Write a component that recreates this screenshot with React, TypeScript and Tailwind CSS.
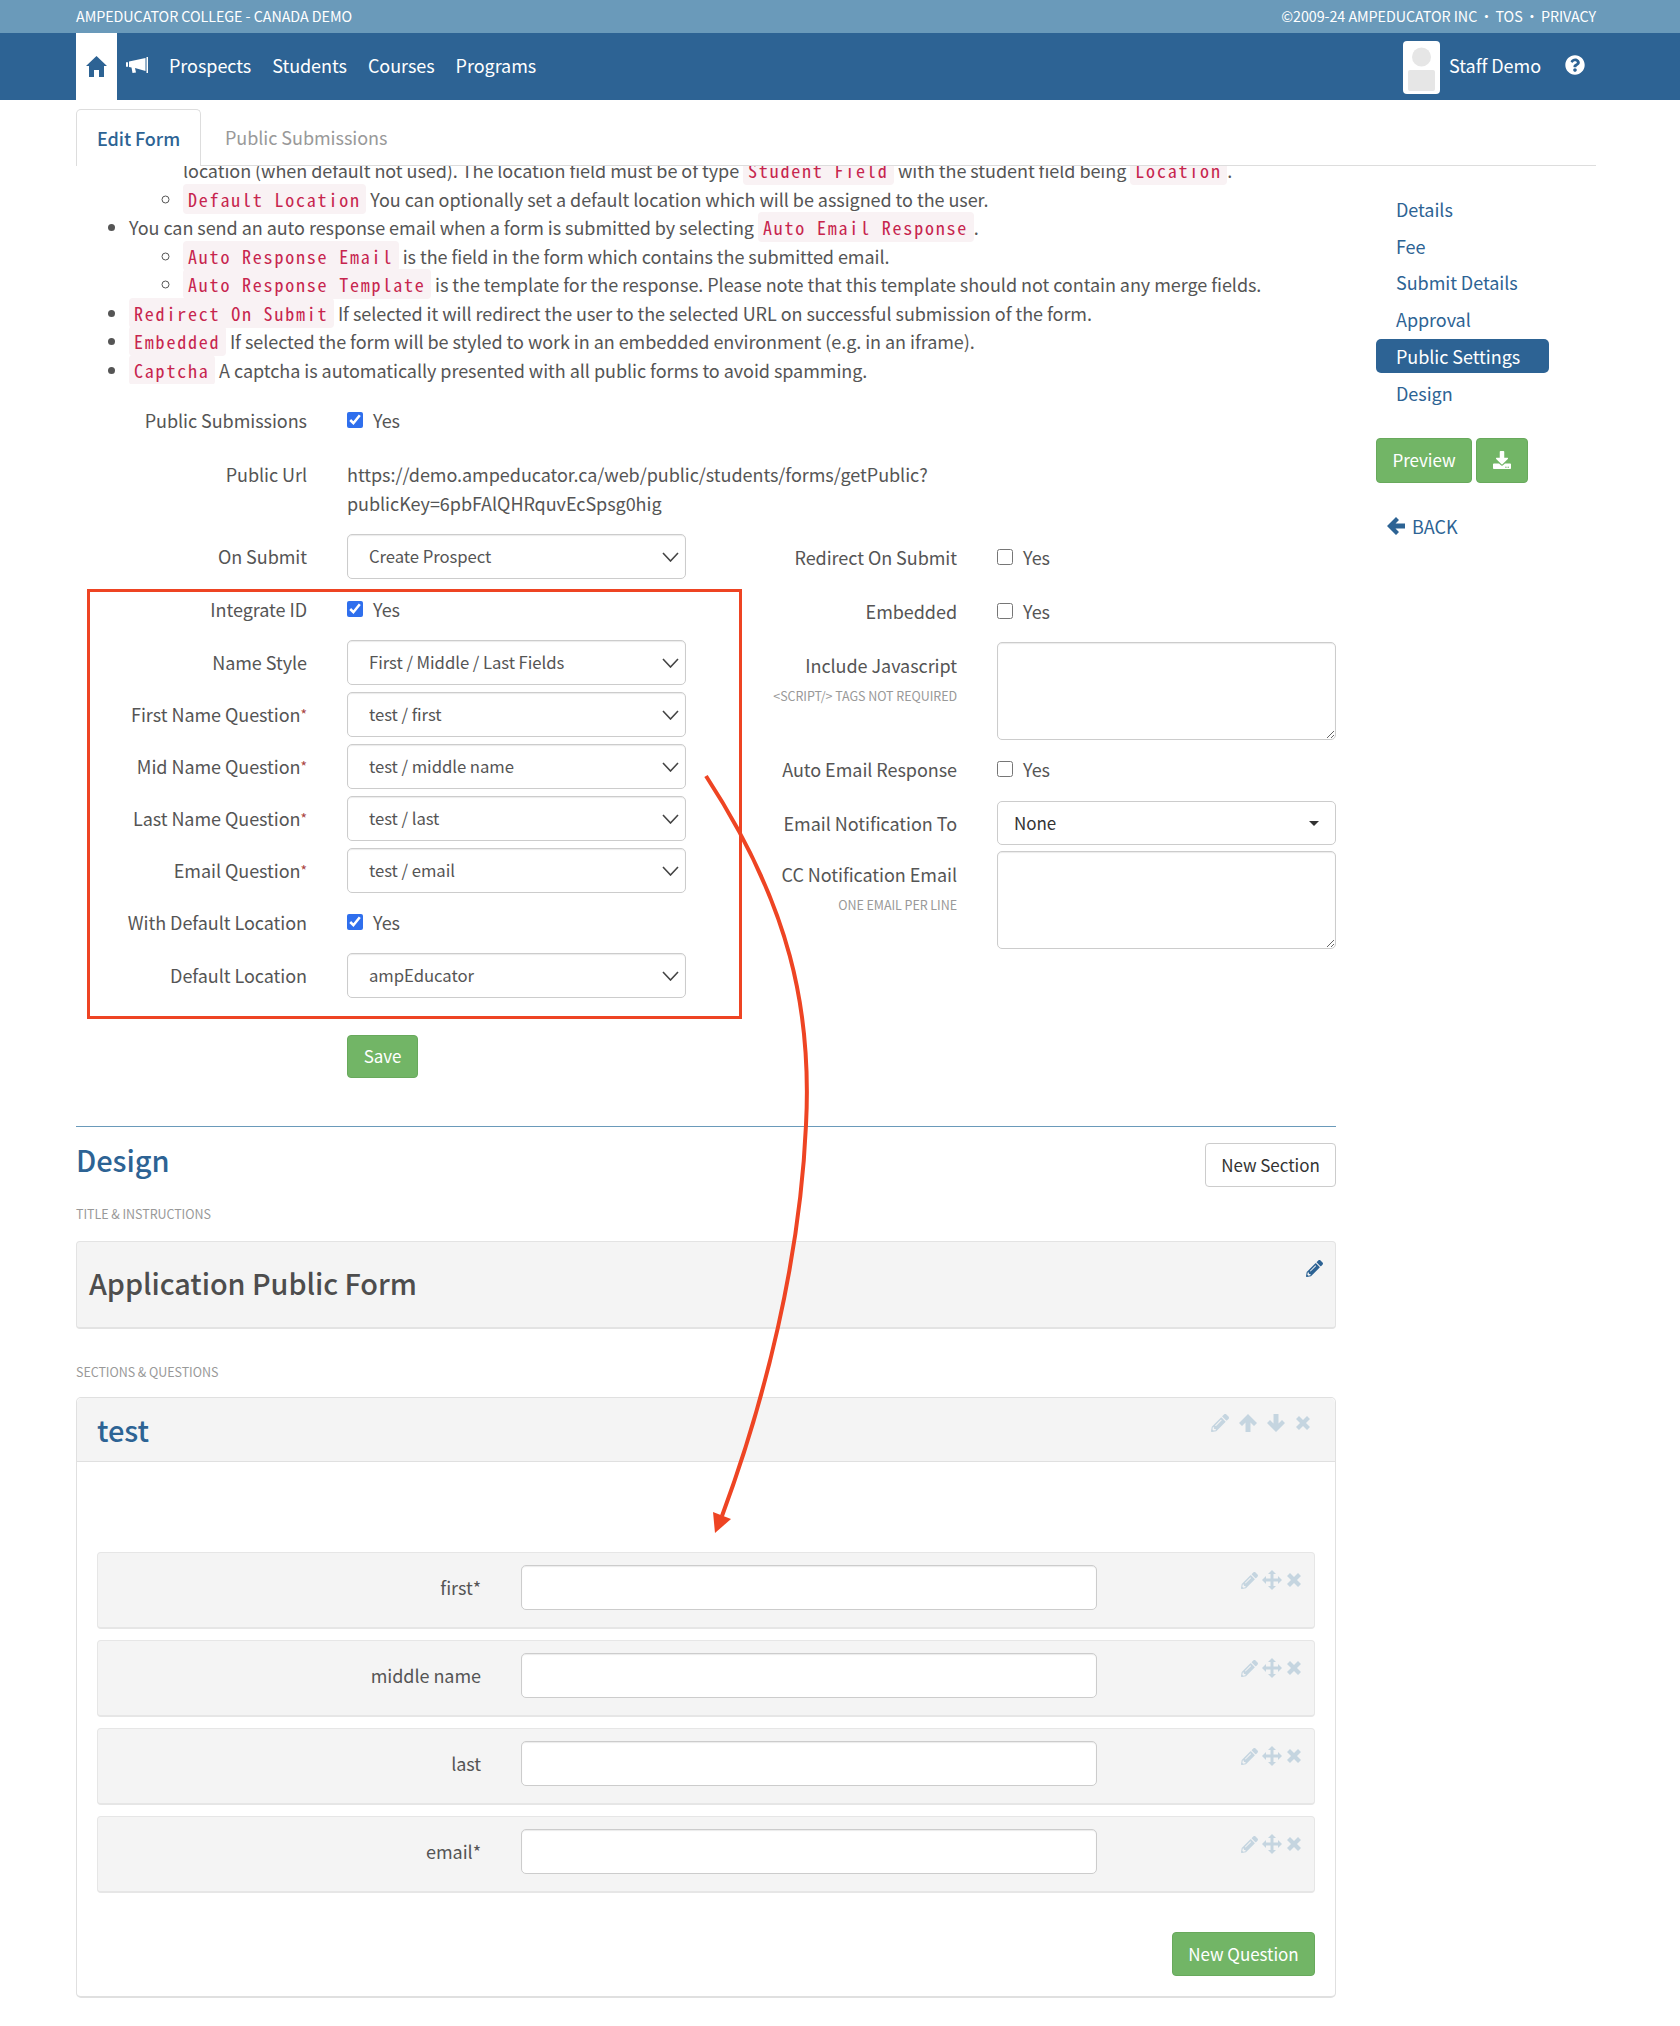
import { FaQuestionCircle, FaDownload, FaPencilAlt } from 'react-icons/fa';

const ArrowIcon = ({ className }: { className?: string }) => (
    <svg width="18" height="18" viewBox="0 0 18 18" fill="currentColor" className={className}>
        <path d="M9 0 L18 9 L15 12 L11.5 8.5 V18 H6.5 V8.5 L3 12 L0 9Z" />
    </svg>
);

const CrossIcon = () => (
    <svg width="14" height="14" viewBox="0 0 14 14" fill="currentColor">
        <path d="M3 0 L7 4 L11 0 L14 3 L10 7 L14 11 L11 14 L7 10 L3 14 L0 11 L4 7 L0 3Z" />
    </svg>
);

const MoveIcon = () => (
    <svg width="20" height="20" viewBox="0 0 20 20" fill="currentColor">
        <path d="M10 0 L14 4 H11.5 V8.5 H16 V6 L20 10 L16 14 V11.5 H11.5 V16 H14 L10 20 L6 16 H8.5 V11.5 H4 V14 L0 10 L4 6 V8.5 H8.5 V4 H6Z" />
    </svg>
);

const Code = ({ children }: { children: string }) => (
    <code className="bg-[#f9f2f4] text-[#c7254e] rounded-[4px] pl-[5px] pr-[5.5px] py-[2px] text-[18px] tracking-[1.8px] font-['Noto_Sans_Mono_CJK_SC','Liberation_Mono',monospace]">{children}</code>
);

const Label = ({ children, req }: { children: string; req?: boolean }) => (
    <label className="w-[231px] shrink-0 text-right">
        {children}{req && <span className="text-[#a94442] text-[14px] align-top">*</span>}
    </label>
);

const Check = ({ checked, label, wide }: { checked?: boolean; label: string; wide?: boolean }) => (
    <div className="flex items-center h-[40px]">
        <label className={wide ? 'w-[271px] shrink-0 text-right mr-[40px]' : 'w-[231px] shrink-0 text-right mr-[40px]'}>{label}</label>
        <input type="checkbox" defaultChecked={checked} className="w-[16px] h-[16px] m-0 accent-[#2f6fed]" />
        <span className="ml-[10px]">Yes</span>
    </div>
);

const SelectRow = ({ label, value, req }: { label: string; value: string; req?: boolean }) => (
    <div className="flex items-center gap-[40px] h-[45px]">
        <Label req={req}>{label}</Label>
        <div className="relative w-[339px]">
            <select className="w-full h-[45px] appearance-none bg-white border border-[#ccc] rounded-[5px] pl-[21px] text-[16.7px] text-[#555] shadow-[inset_0_1px_1px_rgba(0,0,0,0.08)]">
                <option>{value}</option>
            </select>
            <svg width="17" height="10" viewBox="0 0 17 10" fill="none" stroke="#444" strokeWidth="1.6" className="absolute right-[7px] top-[18px] pointer-events-none">
                <polyline points="1,1 8.5,9 16,1" />
            </svg>
        </div>
    </div>
);

const TextRow = ({ label, hint }: { label: string; hint: string }) => (
    <div className="flex gap-[40px]">
        <div className="w-[271px] shrink-0 text-right pt-[9px]">
            <div>{label}</div>
            <div className="text-[12.5px] text-[#999] uppercase mt-[2px]">{hint}</div>
        </div>
        <textarea className="w-[339px] h-[98px] bg-white border border-[#ccc] rounded-[5px] shadow-[inset_0_1px_1px_rgba(0,0,0,0.08)]" />
    </div>
);

const questions = ['first*', 'middle name', 'last', 'email*'];
const sideLinks = ['Details', 'Fee', 'Submit Details', 'Approval', 'Public Settings', 'Design'];

const App = () => {
    return (
        <div className="relative min-h-[2026px] bg-white text-[18px] tracking-[-0.05px] text-[#555] leading-[28.5px] font-['Noto_Sans_CJK_SC','Noto_Sans',sans-serif]">
            <div className="h-[33px] bg-[#6a9aba] pl-[76px] pr-[84px] flex items-center justify-between text-[14.3px] text-white uppercase">
                <span>Ampeducator College - Canada Demo</span>
                <div className="flex gap-[2px]">
                    <span>©2009-24 Ampeducator Inc</span>
                    <span>·</span>
                    <span>TOS</span>
                    <span>·</span>
                    <span>Privacy</span>
                </div>
            </div>

            <div className="h-[67px] bg-[#2d6394] pl-[76px] pr-[95px] flex items-center justify-between text-white">
                <div className="flex items-center h-full">
                    <div className="w-[41px] h-full bg-white flex items-center justify-center text-[#2d6394]">
                        <svg width="21" height="21" viewBox="0 0 21 21" fill="currentColor" className="-mt-[1px]">
                            <path d="M10.5 0 L21 10 H18 V21 H13 V14 H8 V21 H3 V10 H0Z" />
                        </svg>
                    </div>
                    <svg width="22" height="17" viewBox="0 0 22 17" fill="currentColor" className="ml-[9px] mr-[21px] -mt-[2px]">
                        <rect x="0" y="5" width="2" height="5" rx="1" />
                        <path d="M3 4.5 L19.5 1 V14 L9 11 L10 15.5 L6.5 16 L5.5 10.5 L3 10Z" />
                        <rect x="20.5" y="0" width="1.5" height="16" />
                    </svg>
                    <div className="flex gap-[21px] -mt-[2px]">
                        <span>Prospects</span>
                        <span>Students</span>
                        <span>Courses</span>
                        <span>Programs</span>
                    </div>
                </div>
                <div className="flex items-center">
                    <svg width="37" height="53" viewBox="0 0 37 53" className="mt-[2px]">
                        <rect width="37" height="53" rx="4" fill="#fff" />
                        <circle cx="18.5" cy="16" r="9.5" fill="#e6e6e6" />
                        <rect x="5" y="29" width="27" height="21" rx="2" fill="#e6e6e6" />
                    </svg>
                    <span className="ml-[9px] -mt-[2px]">Staff Demo</span>
                    <FaQuestionCircle size={20} className="ml-[24px] -mt-[4px]" />
                </div>
            </div>

            <div className="pl-[76px]">
                <div className="flex h-[57px] mt-[9px] border-b border-[#ddd] w-[1520px]">
                    <div className="w-[125px] h-[57px] bg-white border border-b-0 border-[#ddd] rounded-t-[5px] flex items-center justify-center text-[#2d6394] font-medium">Edit Form</div>
                    <div className="pl-[24px] flex items-center text-[#999]">Public Submissions</div>
                </div>

                <div className="flex">
                    <div className="w-[1260px] shrink-0">
                        <div className="overflow-hidden">
                            <ul className="list-disc pl-[53px] -mt-[10px]">
                                <li className="list-none">
                                    <ul className="list-[circle] pl-[54px]">
                                        <li className="list-none">location (when default not used). The location field must be of type <Code>Student Field</Code> with the student field being <Code>Location</Code>.</li>
                                        <li><Code>Default Location</Code> You can optionally set a default location which will be assigned to the user.</li>
                                    </ul>
                                </li>
                                <li>You can send an auto response email when a form is submitted by selecting <Code>Auto Email Response</Code>.
                                    <ul className="list-[circle] pl-[54px]">
                                        <li><Code>Auto Response Email</Code> is the field in the form which contains the submitted email.</li>
                                        <li><Code>Auto Response Template</Code> is the template for the response. Please note that this template should not contain any merge fields.</li>
                                    </ul>
                                </li>
                                <li><Code>Redirect On Submit</Code> If selected it will redirect the user to the selected URL on successful submission of the form.</li>
                                <li><Code>Embedded</Code> If selected the form will be styled to work in an embedded environment (e.g. in an iframe).</li>
                                <li><Code>Captcha</Code> A captcha is automatically presented with all public forms to avoid spamming.</li>
                            </ul>
                        </div>

                        <div className="mt-[16px]">
                            <Check checked label="Public Submissions" />
                        </div>
                        <div className="flex gap-[40px] mt-[20px]">
                            <Label>Public Url</Label>
                            <div className="leading-[29px]">https://demo.ampeducator.ca/web/public/students/forms/getPublic?<br />publicKey=6pbFAlQHRquvEcSpsg0hig</div>
                        </div>

                        <div className="flex mt-[16px]">
                            <div className="w-[610px] shrink-0">
                                <SelectRow label="On Submit" value="Create Prospect" />
                                <div className="mt-[10px]"><Check checked label="Integrate ID" /></div>
                                <div className="mt-[11px] flex flex-col gap-[7px]">
                                    <SelectRow label="Name Style" value="First / Middle / Last Fields" />
                                    <SelectRow req label="First Name Question" value="test / first" />
                                    <SelectRow req label="Mid Name Question" value="test / middle name" />
                                    <SelectRow req label="Last Name Question" value="test / last" />
                                    <SelectRow req label="Email Question" value="test / email" />
                                </div>
                                <div className="mt-[9px]"><Check checked label="With Default Location" /></div>
                                <div className="mt-[11px]"><SelectRow label="Default Location" value="ampEducator" /></div>
                                <button className="block ml-[271px] mt-[37px] w-[71px] h-[43px] bg-[#72b566] border border-[#68a95c] rounded-[4px] text-white text-[17px]">Save</button>
                            </div>

                            <div>
                                <div className="mt-[3px]"><Check wide label="Redirect On Submit" /></div>
                                <div className="mt-[14px]"><Check wide label="Embedded" /></div>
                                <div className="mt-[11px]"><TextRow label="Include Javascript" hint="<script/> tags not required" /></div>
                                <div className="mt-[9px]"><Check wide label="Auto Email Response" /></div>
                                <div className="flex items-center gap-[40px] mt-[12px]">
                                    <label className="w-[271px] shrink-0 text-right">Email Notification To</label>
                                    <div className="relative w-[339px] h-[44px] bg-white border border-[#ccc] rounded-[5px] flex items-center pl-[16px] text-[17px] text-[#333]">
                                        None
                                        <span className="absolute right-[16px] top-[19px] border-x-[5px] border-x-transparent border-t-[5px] border-t-[#333]" />
                                    </div>
                                </div>
                                <div className="mt-[6px]"><TextRow label="CC Notification Email" hint="One email per line" /></div>
                            </div>
                        </div>

                        <div className="border-t border-[#6a9aba] mt-[48px] pt-[16px] flex justify-between items-start">
                            <h2 className="text-[29px] leading-[44px] font-medium text-[#2d6394] -mt-[6px]">Design</h2>
                            <button className="w-[131px] h-[44px] bg-white border border-[#ccc] rounded-[4px] text-[17px] text-[#333]">New Section</button>
                        </div>

                        <div className="text-[12.5px] text-[#999] uppercase mt-[13px] leading-[28px]">Title &amp; Instructions</div>
                        <div className="mt-[13px] h-[88px] bg-[#f4f4f4] border border-[#e3e3e3] border-b-2 rounded-[4px] flex justify-between px-[12px]">
                            <div className="text-[28.8px] leading-[44px] font-medium text-[#4d4d4d] mt-[19px]">Application Public Form</div>
                            <FaPencilAlt size={17} className="text-[#2d6394] mt-[18px]" />
                        </div>

                        <div className="text-[12.5px] text-[#999] uppercase mt-[29px] leading-[28px]">Sections &amp; Questions</div>
                        <div className="mt-[11px] border border-[#e0e0e0] border-b-2 rounded-[5px]">
                            <div className="h-[64px] bg-[#f4f4f4] border-b border-[#e0e0e0] rounded-t-[5px] flex justify-between pl-[20px] pr-[25px]">
                                <div className="text-[29px] leading-[44px] font-medium text-[#2d6394] mt-[9px]">test</div>
                                <div className="flex gap-[10px] text-[#c5d5e0] mt-[16px] h-[18px]">
                                    <FaPencilAlt size={18} />
                                    <ArrowIcon />
                                    <ArrowIcon className="rotate-180" />
                                    <div className="ml-[1px] mt-[2px]"><CrossIcon /></div>
                                </div>
                            </div>
                            <div className="pt-[90px] px-[20px] pb-[20px]">
                                <div className="flex flex-col gap-[11px]">
                                    {questions.map((q) => (
                                        <div key={q} className="h-[77px] bg-[#f4f4f4] border border-[#e6e6e6] border-b-2 rounded-[4px] flex pr-[13px]">
                                            <div className="w-[383px] text-right mt-[20px]">{q}</div>
                                            <input className="ml-[40px] mt-[12px] w-[576px] h-[45px] bg-white border border-[#ccc] rounded-[5px] shadow-[inset_0_1px_1px_rgba(0,0,0,0.08)]" />
                                            <div className="ml-auto flex items-center gap-[4px] text-[#c5d5e0] mt-[17px] h-[20px]">
                                                <FaPencilAlt size={17} />
                                                <MoveIcon />
                                                <div className="ml-[1px]"><CrossIcon /></div>
                                            </div>
                                        </div>
                                    ))}
                                </div>
                                <div className="flex justify-end mt-[39px]">
                                    <button className="w-[143px] h-[44px] bg-[#72b566] border border-[#68a95c] rounded-[4px] text-white text-[17px]">New Question</button>
                                </div>
                            </div>
                        </div>
                    </div>

                    <div className="ml-[40px] w-[173px] pt-[26px]">
                        <div className="flex flex-col gap-[2.8px] text-[#2d6394]">
                            {sideLinks.map((link) => (
                                <div key={link} className={link === 'Public Settings' ? 'h-[34px] rounded-[5px] bg-[#2d6394] text-white pl-[20px] flex items-center' : 'h-[34px] pl-[20px] flex items-center'}>{link}</div>
                            ))}
                        </div>
                        <div className="flex gap-[4px] mt-[28px]">
                            <button className="w-[96px] h-[45px] bg-[#72b566] border border-[#68a95c] rounded-[4px] text-white text-[17px]">Preview</button>
                            <button className="w-[52px] h-[45px] bg-[#72b566] border border-[#68a95c] rounded-[4px] text-white flex items-center justify-center"><FaDownload size={18} /></button>
                        </div>
                        <div className="flex items-center text-[#2d6394] mt-[29px] pl-[11px]">
                            <ArrowIcon className="-rotate-90" />
                            <span className="ml-[7px]">BACK</span>
                        </div>
                    </div>
                </div>
            </div>

            {/* red annotation over the form */}
            <div className="absolute left-[87px] top-[589px] w-[655px] h-[430px] border-[3px] border-[#ee4423] pointer-events-none" />
            <svg className="absolute left-0 top-0 pointer-events-none" width="1680" height="2026" fill="none">
                <path d="M706 776 C790 905 812 1010 806 1125 C800 1260 765 1400 722 1516" stroke="#ee4423" strokeWidth="4" />
                <path d="M715 1533 L713 1512 L731 1519 Z" fill="#ee4423" />
            </svg>
        </div>
    );
};

export default App;
